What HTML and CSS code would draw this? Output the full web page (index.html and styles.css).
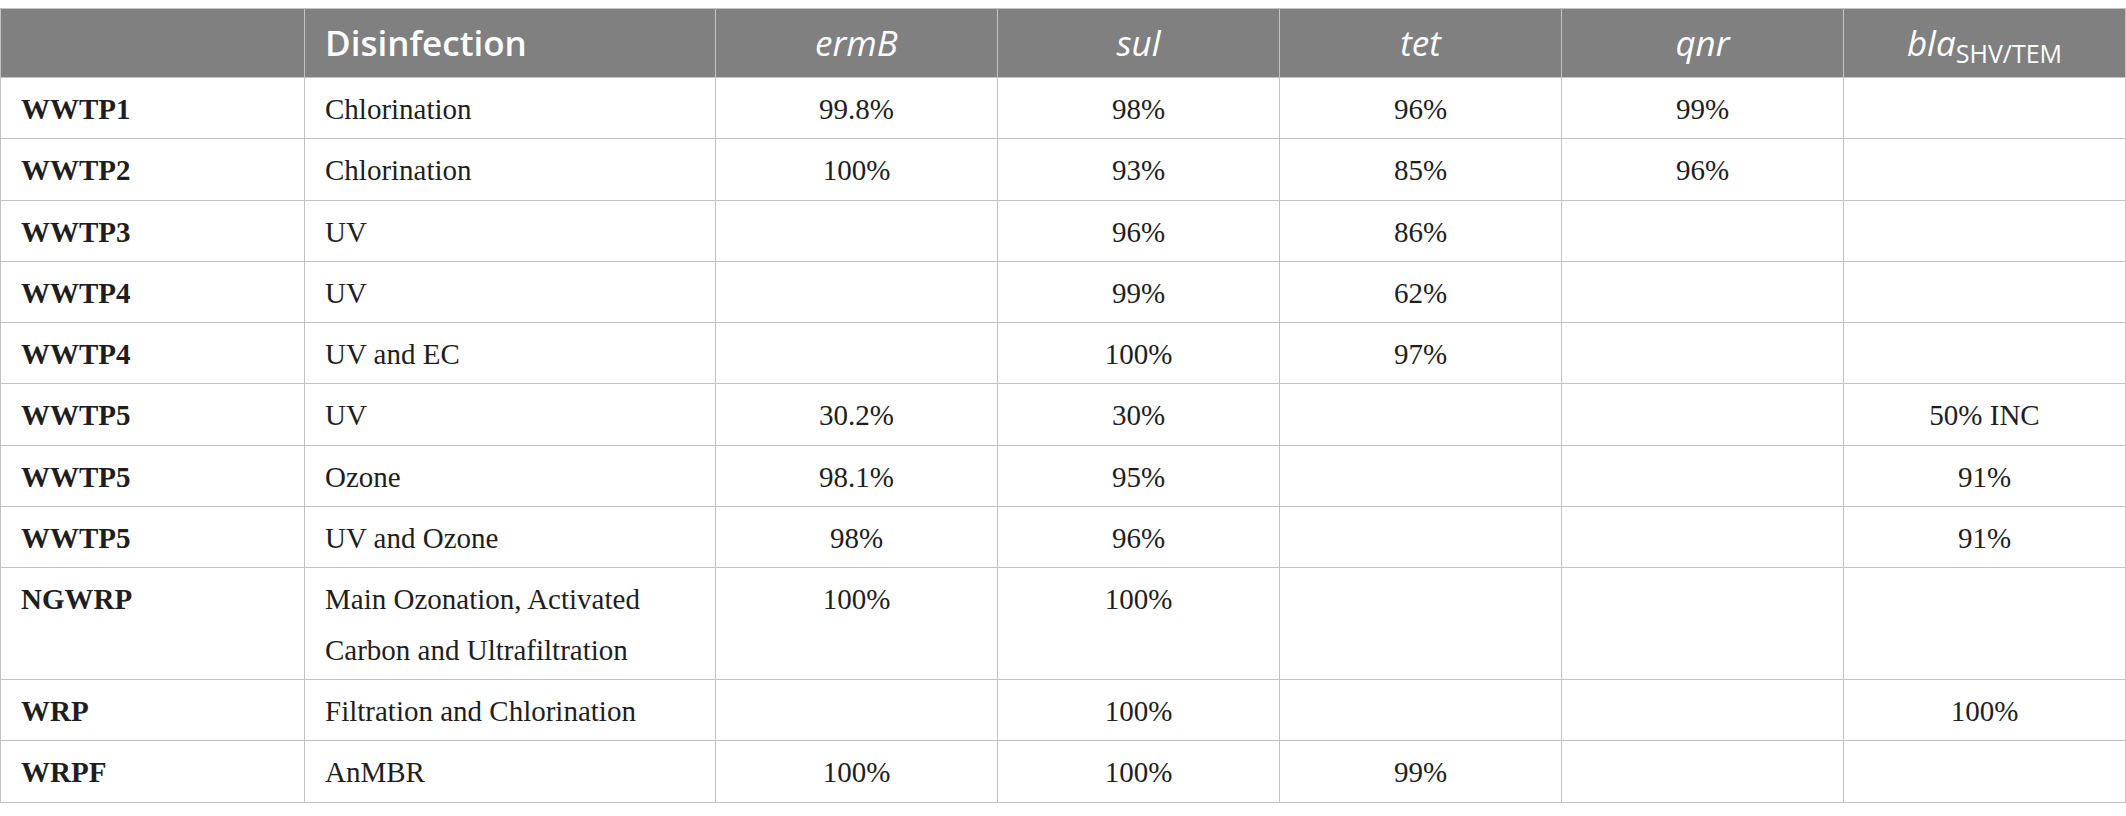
FILE: index.html
```html
<!DOCTYPE html>
<html>
<head>
<meta charset="utf-8">
<link rel="stylesheet" href="styles.css">
</head>
<body>
<table class="data">
  <colgroup>
    <col class="c-site">
    <col class="c-dis">
    <col class="c-val">
    <col class="c-val">
    <col class="c-val">
    <col class="c-val">
    <col class="c-val">
  </colgroup>
  <thead>
    <tr>
      <th></th>
      <th class="left">Disinfection</th>
      <th><i>ermB</i></th>
      <th><i>sul</i></th>
      <th><i>tet</i></th>
      <th><i>qnr</i></th>
      <th><i>bla</i><sub>SHV/TEM</sub></th>
    </tr>
  </thead>
  <tbody>
    <tr><td class="site">WWTP1</td><td class="left">Chlorination</td><td>99.8%</td><td>98%</td><td>96%</td><td>99%</td><td></td></tr>
    <tr><td class="site">WWTP2</td><td class="left">Chlorination</td><td>100%</td><td>93%</td><td>85%</td><td>96%</td><td></td></tr>
    <tr><td class="site">WWTP3</td><td class="left">UV</td><td></td><td>96%</td><td>86%</td><td></td><td></td></tr>
    <tr><td class="site">WWTP4</td><td class="left">UV</td><td></td><td>99%</td><td>62%</td><td></td><td></td></tr>
    <tr><td class="site">WWTP4</td><td class="left">UV and EC</td><td></td><td>100%</td><td>97%</td><td></td><td></td></tr>
    <tr><td class="site">WWTP5</td><td class="left">UV</td><td>30.2%</td><td>30%</td><td></td><td></td><td>50% INC</td></tr>
    <tr><td class="site">WWTP5</td><td class="left">Ozone</td><td>98.1%</td><td>95%</td><td></td><td></td><td>91%</td></tr>
    <tr><td class="site">WWTP5</td><td class="left">UV and Ozone</td><td>98%</td><td>96%</td><td></td><td></td><td>91%</td></tr>
    <tr><td class="site">NGWRP</td><td class="left">Main Ozonation, Activated<br>Carbon and Ultrafiltration</td><td>100%</td><td>100%</td><td></td><td></td><td></td></tr>
    <tr><td class="site">WRP</td><td class="left">Filtration and Chlorination</td><td></td><td>100%</td><td></td><td></td><td>100%</td></tr>
    <tr><td class="site">WRPF</td><td class="left">AnMBR</td><td>100%</td><td>100%</td><td>99%</td><td></td><td></td></tr>
  </tbody>
</table>
</body>
</html>
```

FILE: styles.css
```css
html, body {
  margin: 0;
  padding: 0;
  background: #ffffff;
}
body {
  padding-top: 8px;
}
.data {
  width: 2126px;
  border-collapse: collapse;
  table-layout: fixed;
  font-family: "Liberation Serif", "Times New Roman", serif;
  font-size: 29px;
  color: #1e1e1e;
}
.c-site { width: 304px; }
.c-dis { width: 411px; }
.c-val { width: 282px; }
.data th,
.data td {
  border: 1px solid #c3c3c3;
  padding: 6px 20px 4px;
  text-align: center;
  vertical-align: top;
}
.data th {
  background: #7f807f;
  color: #ffffff;
  font-family: "Open Sans", "DejaVu Sans", sans-serif;
  font-size: 35px;
  font-weight: 600;
  line-height: 58px;
  padding: 5px 20px;
  vertical-align: middle;
}
.data th i {
  font-weight: 400;
}
.data th sub {
  font-size: 25px;
  font-weight: 400;
  font-style: normal;
  vertical-align: -7px;
  line-height: 0;
}
.data td {
  line-height: 50.3px;
}
.data .left {
  text-align: left;
}
.data td.site {
  font-weight: 700;
  text-align: left;
}
```
